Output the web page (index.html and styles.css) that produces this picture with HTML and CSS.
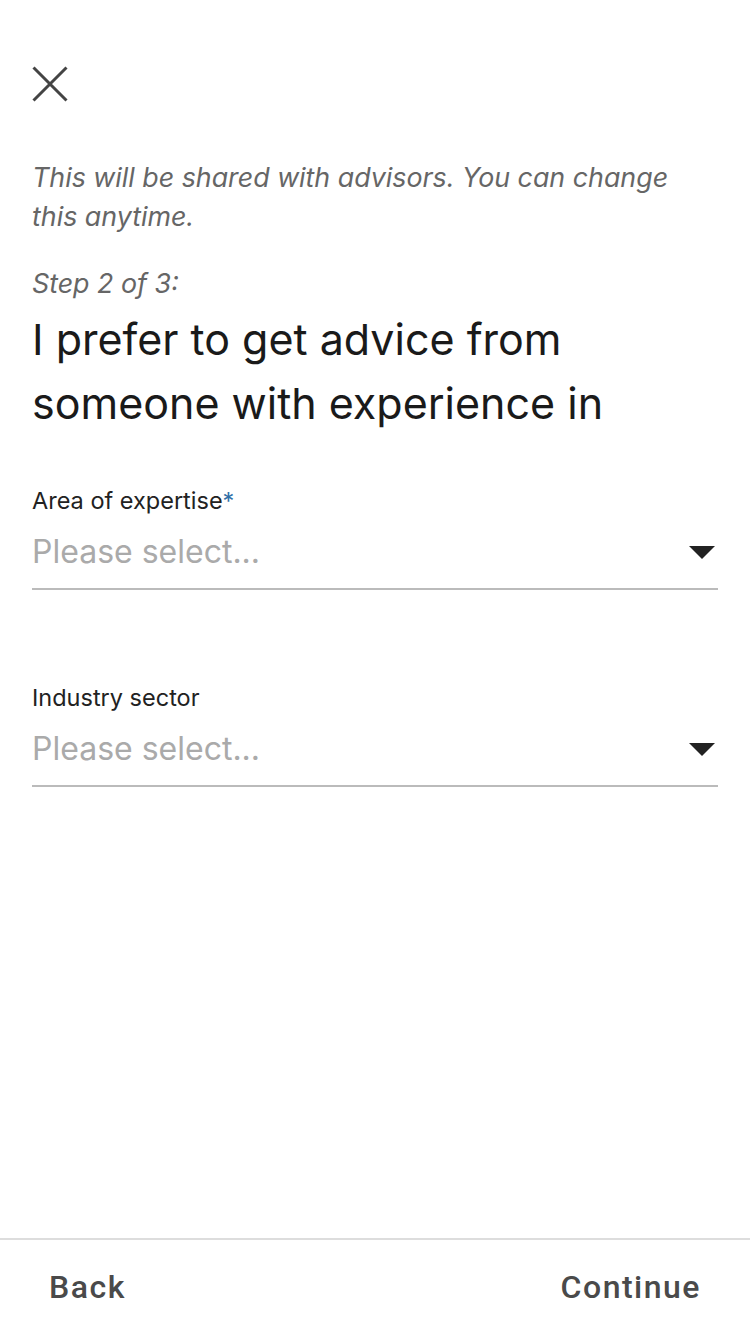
FILE: index.html
```html
<!DOCTYPE html>
<html lang="en">
<head>
<meta charset="utf-8">
<title>Preferences</title>
<link rel="stylesheet" href="styles.css">
</head>
<body>
<div class="screen">
  <main class="content">
    <button class="close" aria-label="Close">
      <svg width="36" height="36" viewBox="0 0 36 36"><path d="M1.5 1.5 L34.5 34.5 M34.5 1.5 L1.5 34.5" stroke="#444" stroke-width="3" fill="none"/></svg>
    </button>
    <p class="note">This will be shared with advisors. You can change this anytime.</p>
    <p class="step">Step 2 of 3:</p>
    <h1 class="title">I prefer to get advice from someone with experience in</h1>
    <div class="field">
      <div class="label">Area of expertise<span class="req">*</span></div>
      <div class="select">
        <span class="placeholder">Please select...</span>
        <span class="caret"></span>
      </div>
    </div>
    <div class="field">
      <div class="label">Industry sector</div>
      <div class="select">
        <span class="placeholder">Please select...</span>
        <span class="caret"></span>
      </div>
    </div>
  </main>
  <footer class="footer">
    <button class="btn">Back</button>
    <button class="btn">Continue</button>
  </footer>
</div>
</body>
</html>
```
FILE: styles.css
```css
* { box-sizing: border-box; }
html, body { margin: 0; padding: 0; background: #fff; }
body { font-family: Inter, "Noto Sans", sans-serif; }
.screen { width: 750px; height: 1334px; display: flex; flex-direction: column; }
.content { flex: 1; padding: 66px 32px 0 32px; }
.close { display: block; width: 36px; height: 36px; padding: 0; margin: 0; border: 0; background: none; }
.close svg { display: block; }
.note { margin: 56px 0 0; max-width: 660px; font-size: 26.8px; line-height: 39px; font-style: italic; color: #666; }
.step { margin: 28px 0 0; font-size: 26.8px; line-height: 39px; font-style: italic; color: #666; }
.title { margin: 4px 0 0; font-size: 43px; line-height: 64px; font-weight: 400; color: #1a1a1a; }
.field { margin-top: 51px; }
.field + .field { margin-top: 93px; }
.label { font-size: 23.5px; line-height: 30px; color: #222; }
.req { color: #2f6fa7; }
.select { display: flex; align-items: center; justify-content: space-between; height: 74px; border-bottom: 2px solid #bbb; }
.placeholder { font-size: 32px; line-height: 40px; color: #aaa; }
.caret { width: 0; height: 0; border-left: 13px solid transparent; border-right: 13px solid transparent; border-top: 13px solid #222; margin-right: 3px; }
.footer { height: 96px; border-top: 2px solid #ddd; display: flex; justify-content: space-between; align-items: center; padding: 0 49px; }
.btn { border: 0; background: none; padding: 0; font-family: Roboto, sans-serif; font-weight: 500; font-size: 32px; letter-spacing: 1.5px; color: #4a4a4a; }
```
